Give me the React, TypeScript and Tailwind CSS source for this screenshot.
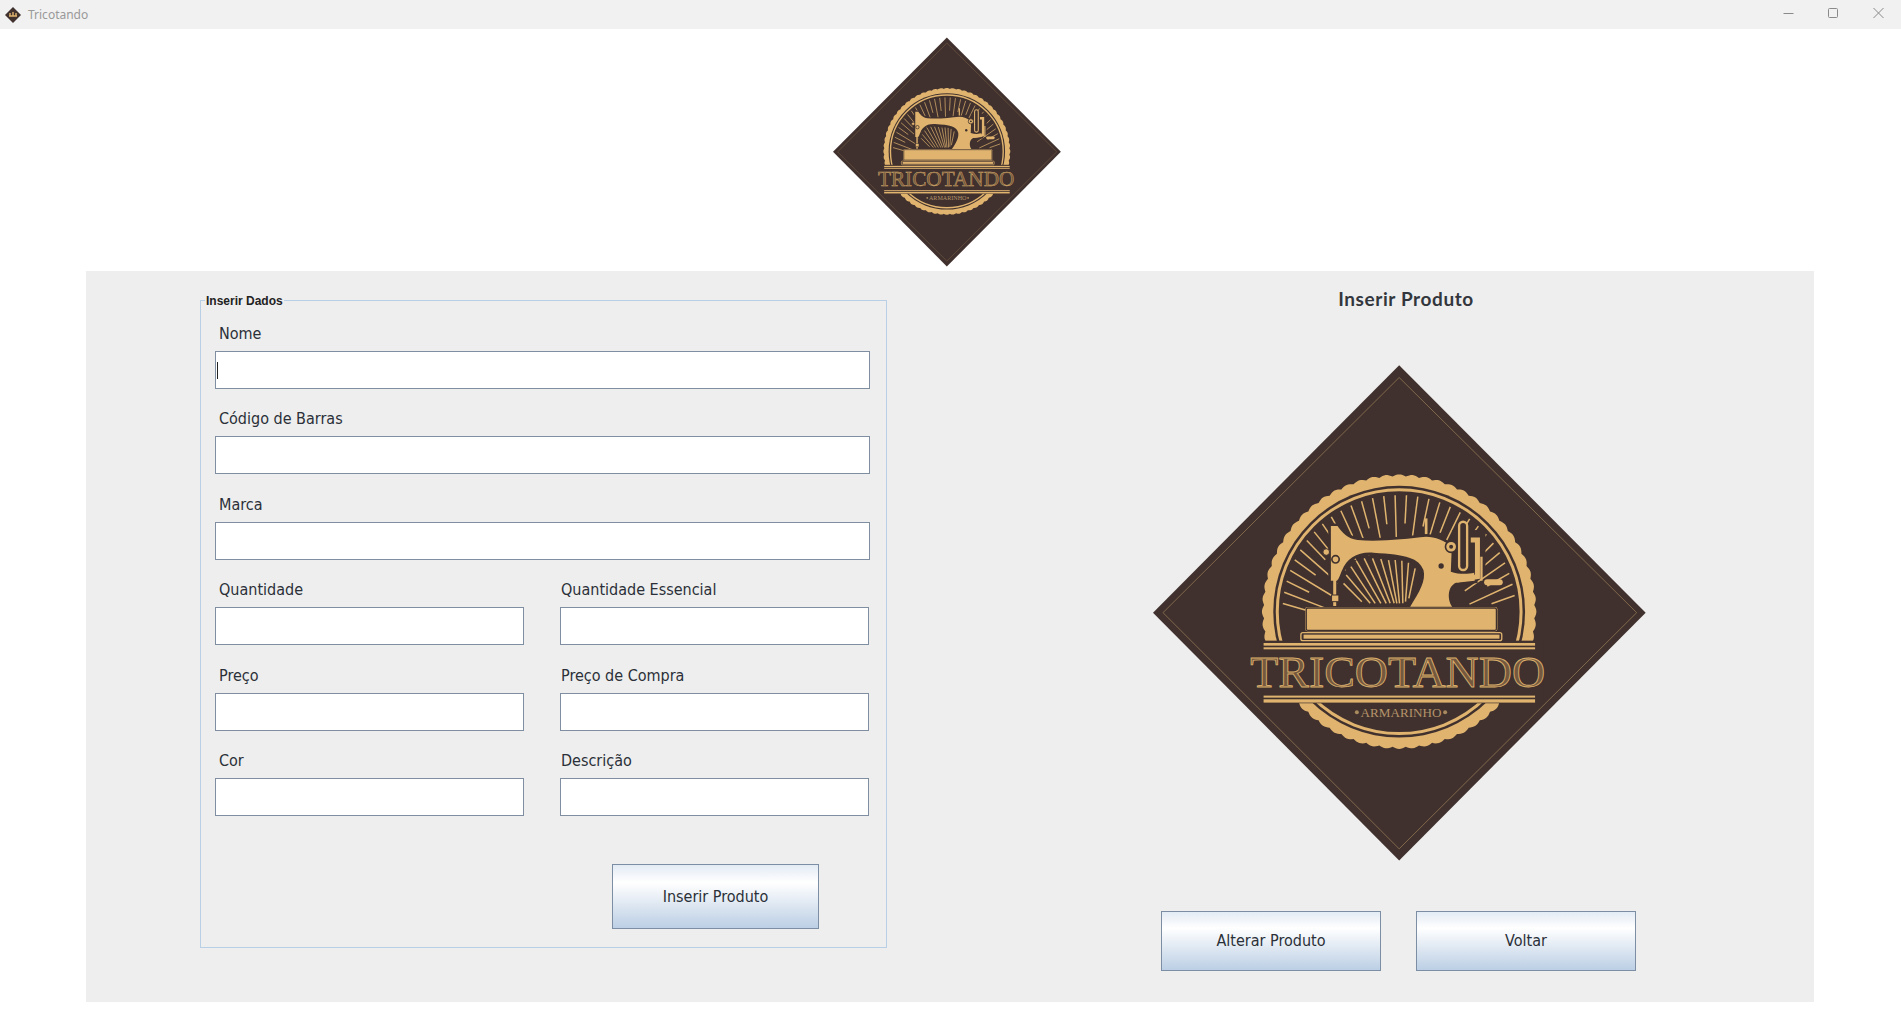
import { useId } from 'react';

const GOLD = '#e0b46f';
const DARK = '#40312e';
const LINE = '#8d7350';

// scalloped edge of the badge
const scallopPoints = () => {
  const pts: string[] = [];
  const steps = 64 * 8;
  for (let i = 0; i < steps; i++) {
    const a = (i / steps) * Math.PI * 2;
    const r = 406 + 6 * Math.abs(Math.cos((a * 64) / 2));
    pts.push(`${(777 + r * Math.cos(a)).toFixed(1)},${(785 + r * Math.sin(a)).toFixed(1)}`);
  }
  return pts.join(' ');
};

// rays behind the sewing machine
const sunRays = () => {
  const rays: { x1: number; y1: number; x2: number; y2: number }[] = [];
  let n = 0;
  for (let deg = 184; deg <= 356; deg += 5.6) {
    const a = (deg * Math.PI) / 180;
    const x1 = 777 + 350 * Math.cos(a);
    const y1 = 785 + 350 * Math.sin(a);
    const t = n % 2 === 0 ? 0.2 : 0.38;
    rays.push({ x1, y1, x2: x1 + (777 - x1) * t, y2: y1 + (860 - y1) * t });
    n++;
  }
  return rays;
};

const FAN = [
  [610, 700, 665, 755],
  [618, 675, 690, 760],
  [632, 650, 705, 760],
  [648, 632, 722, 760],
  [672, 625, 738, 760],
  [697, 625, 750, 760],
  [722, 627, 762, 760],
  [745, 630, 770, 760],
  [765, 630, 778, 760],
  [785, 632, 788, 760],
  [805, 638, 796, 755],
  [825, 655, 806, 745],
];

const BODY =
  'M572 528 L592 528 C606 548 622 566 652 570 C720 576 800 566 858 560 C884 560 915 572 935 590 L932 665 C958 674 985 672 1002 668 L1004 692 L948 698 C926 706 918 742 936 770 L810 770 C838 726 858 692 850 660 C836 624 800 614 700 608 C652 604 620 626 606 660 C598 678 596 688 590 692 L572 692 Z';
const ARCH =
  'M602 770 C598 720 604 690 616 660 C630 630 660 618 700 620 C770 622 815 628 836 662 C846 692 826 728 798 770 Z';

function Logo({ className }: { className: string }) {
  const id = useId();
  return (
    <svg viewBox="38 45 1480 1488" className={className}>
      <defs>
        <clipPath id={id}>
          <path d={ARCH} />
        </clipPath>
      </defs>
      <polygon points="777,45 1517,788 777,1532 38,788" fill={DARK} />
      <polygon points="777,82 1490,788 777,1497 68,788" fill="none" stroke={LINE} strokeWidth="2.5" />

      {/* badge */}
      <polygon points={scallopPoints()} fill={GOLD} />
      <circle cx="777" cy="785" r="378" fill={DARK} />
      <circle cx="777" cy="785" r="366" fill="none" stroke={GOLD} strokeWidth="9" />
      <g stroke={GOLD} strokeWidth="4.5">
        {sunRays().map((r, i) => (
          <line key={i} x1={r.x1} y1={r.y1} x2={r.x2} y2={r.y2} />
        ))}
      </g>
      <rect x="345" y="872" width="865" height="188" fill={DARK} />

      {/* sewing machine */}
      <path d={BODY} fill={DARK} stroke={DARK} strokeWidth="16" />
      <line x1="858" y1="505" x2="858" y2="552" stroke={GOLD} strokeWidth="8" />
      <path d={BODY} fill={GOLD} />
      <path d={ARCH} fill={DARK} />
      <g clipPath={`url(#${id})`} stroke={GOLD} strokeWidth="4.5">
        {FAN.map((r, i) => (
          <line key={i} x1={r[0]} y1={r[1]} x2={r[2]} y2={r[3]} />
        ))}
      </g>
      <rect x="936" y="540" width="100" height="125" fill={DARK} />
      <rect x="957" y="515" width="24" height="145" rx="12" fill={DARK} stroke={GOLD} strokeWidth="7" />
      <circle cx="933" cy="590" r="17" fill={GOLD} stroke={DARK} strokeWidth="5" />
      <circle cx="933" cy="590" r="6" fill={DARK} />
      <path d="M992 570 L1012 570 L1012 680 L950 690" fill="none" stroke={GOLD} strokeWidth="15" />
      <path d="M1024 620 L1024 692" stroke={GOLD} strokeWidth="7" />
      <rect x="1032" y="688" width="56" height="18" rx="9" fill={GOLD} />
      <circle cx="903" cy="648" r="8" fill={DARK} />
      <circle cx="586" cy="628" r="11" fill={GOLD} stroke={DARK} strokeWidth="5" />
      <circle cx="558" cy="606" r="10" fill={GOLD} stroke={DARK} strokeWidth="3" />
      <rect x="579" y="690" width="9" height="78" fill={GOLD} />
      <rect x="574" y="735" width="22" height="20" fill={GOLD} stroke={DARK} strokeWidth="3" />

      {/* machine base */}
      <rect x="495" y="771" width="577" height="73" rx="7" fill={GOLD} />
      <rect x="498" y="774" width="571" height="67" rx="5" fill={GOLD} stroke={DARK} strokeWidth="4" />
      <rect x="482" y="848" width="603" height="24" rx="6" fill={DARK} stroke={GOLD} strokeWidth="4" />
      <rect x="490" y="854" width="588" height="12" fill={GOLD} />

      {/* band */}
      <rect x="370" y="879" width="815" height="8" fill={GOLD} />
      <rect x="370" y="892" width="815" height="6" fill={GOLD} />
      <rect x="370" y="1037" width="815" height="6" fill={GOLD} />
      <rect x="370" y="1048" width="815" height="10" fill={GOLD} />
      <text
        x="330"
        y="1012"
        textLength="885"
        lengthAdjust="spacingAndGlyphs"
        fontFamily="'Liberation Serif', serif"
        fontSize="131"
        fill="#75593f"
        stroke="#d9ae6b"
        strokeWidth="2.6"
      >
        TRICOTANDO
      </text>
      <circle cx="650" cy="1087" r="6" fill="#a98a5e" />
      <circle cx="915" cy="1087" r="6" fill="#a98a5e" />
      <text
        x="661"
        y="1100"
        textLength="243"
        lengthAdjust="spacingAndGlyphs"
        fontFamily="'Liberation Serif', serif"
        fontSize="37"
        fill="#b4936a"
      >
        ARMARINHO
      </text>
    </svg>
  );
}

function TitleBar() {
  return (
    <div className="h-[29px] bg-[#f1f1f1] flex items-center shrink-0">
      <svg viewBox="0 0 16 16" className="w-[16px] h-[16px] ml-[5px]">
        <polygon points="8,0 16,8 8,16 0,8" fill={DARK} />
        <path d="M4 9 H12 M5 6 V9 M8 5 V9 M11 6 V9" stroke={GOLD} strokeWidth="1.4" fill="none" />
      </svg>
      <span className="ml-[7px] text-[12px] leading-none text-[#999999] font-['Noto_Sans',sans-serif]">
        Tricotando
      </span>
      <div className="ml-auto flex items-center">
        <svg viewBox="0 0 45 29" className="w-[45px] h-[29px]" stroke="#8a8a8a" fill="none">
          <path d="M17.5 13.5 H27.5" />
        </svg>
        <svg viewBox="0 0 45 29" className="w-[45px] h-[29px]" stroke="#8a8a8a" fill="none">
          <rect x="17.5" y="8.5" width="9" height="9" rx="1" />
        </svg>
        <svg viewBox="0 0 45 29" className="w-[45px] h-[29px]" stroke="#8a8a8a" fill="none">
          <path d="M17.5 8 L27.5 18 M27.5 8 L17.5 18" />
        </svg>
      </div>
    </div>
  );
}

function Field({ label, className, caret }: { label: string; className: string; caret?: boolean }) {
  return (
    <div className={className}>
      <label className="h-[47px] flex items-end pb-[7px] pl-[4px] text-[16px] leading-[20px] text-[#2b3038] font-['DejaVu_Sans',sans-serif] [font-stretch:condensed]">
        {label}
      </label>
      <div className="relative">
        <input className="block w-full h-[38px] border border-[#7f8fa1] bg-white outline-none" readOnly />
        {caret && <div className="absolute left-[2px] top-[11px] w-[1px] h-[17px] bg-[#222222]" />}
      </div>
    </div>
  );
}

function Button({ label, className }: { label: string; className: string }) {
  return (
    <button className={`border border-[#7b8ea3] bg-[linear-gradient(180deg,#e3ebf4_0%,#ffffff_28%,#dfe8f2_62%,#bccfe5_100%)] text-[16px] text-[#2b3038] font-['DejaVu_Sans',sans-serif] [font-stretch:condensed] ${className}`}>
      {label}
    </button>
  );
}

export default function App() {
  return (
    <div className="w-[1901px] h-[1013px] bg-white flex flex-col overflow-hidden font-['Noto_Sans',sans-serif]">
      <TitleBar />
      <div className="h-[242px] flex justify-center pt-[8px]">
        <Logo className="w-[228px] h-[230px] mr-[7px]" />
      </div>

      <div className="ml-[86px] w-[1728px] h-[731px] bg-[#eeeeee] flex">
        {/* form */}
        <div className="pl-[114px] pt-[22px]">
          <fieldset className="w-[687px] border border-[#b9cfe5] px-[14px] pb-[18px]">
            <legend className="ml-[-10px] px-[1px] translate-y-[1px] text-[12px] leading-[14px] font-bold text-[#222222] font-['Liberation_Sans',sans-serif]">
              Inserir Dados
            </legend>
            <Field label="Nome" className="w-[655px] mt-[-3px]" caret />
            <Field label="Código de Barras" className="w-[655px]" />
            <Field label="Marca" className="w-[655px] mt-[1px]" />
            <div className="grid grid-cols-[309px_309px] gap-x-[36px] w-[655px]">
              <Field label="Quantidade" className="" />
              <Field label="Quantidade Essencial" className="[&_label]:pl-[1px]" />
              <Field label="Preço" className="mt-[1px]" />
              <Field label="Preço de Compra" className="mt-[1px] [&_label]:pl-[1px]" />
              <Field label="Cor" className="" />
              <Field label="Descrição" className="[&_label]:pl-[1px]" />
            </div>
            <Button label="Inserir Produto" className="block ml-[397px] mt-[48px] w-[207px] h-[65px]" />
          </fieldset>
        </div>

        {/* logo side */}
        <div className="ml-[266px] w-[493px] pt-[16px] flex flex-col">
          <h1 className="pl-[13px] text-center text-[19px] leading-[24px] font-bold tracking-[0.6px] text-[#33373d] font-['Lato',sans-serif]">
            Inserir Produto
          </h1>
          <Logo className="mt-[54px] w-[493px] h-[496px]" />
          <div className="mt-[50px] ml-[8px] flex gap-[35px]">
            <Button label="Alterar Produto" className="w-[220px] h-[60px]" />
            <Button label="Voltar" className="w-[220px] h-[60px]" />
          </div>
        </div>
      </div>
    </div>
  );
}
